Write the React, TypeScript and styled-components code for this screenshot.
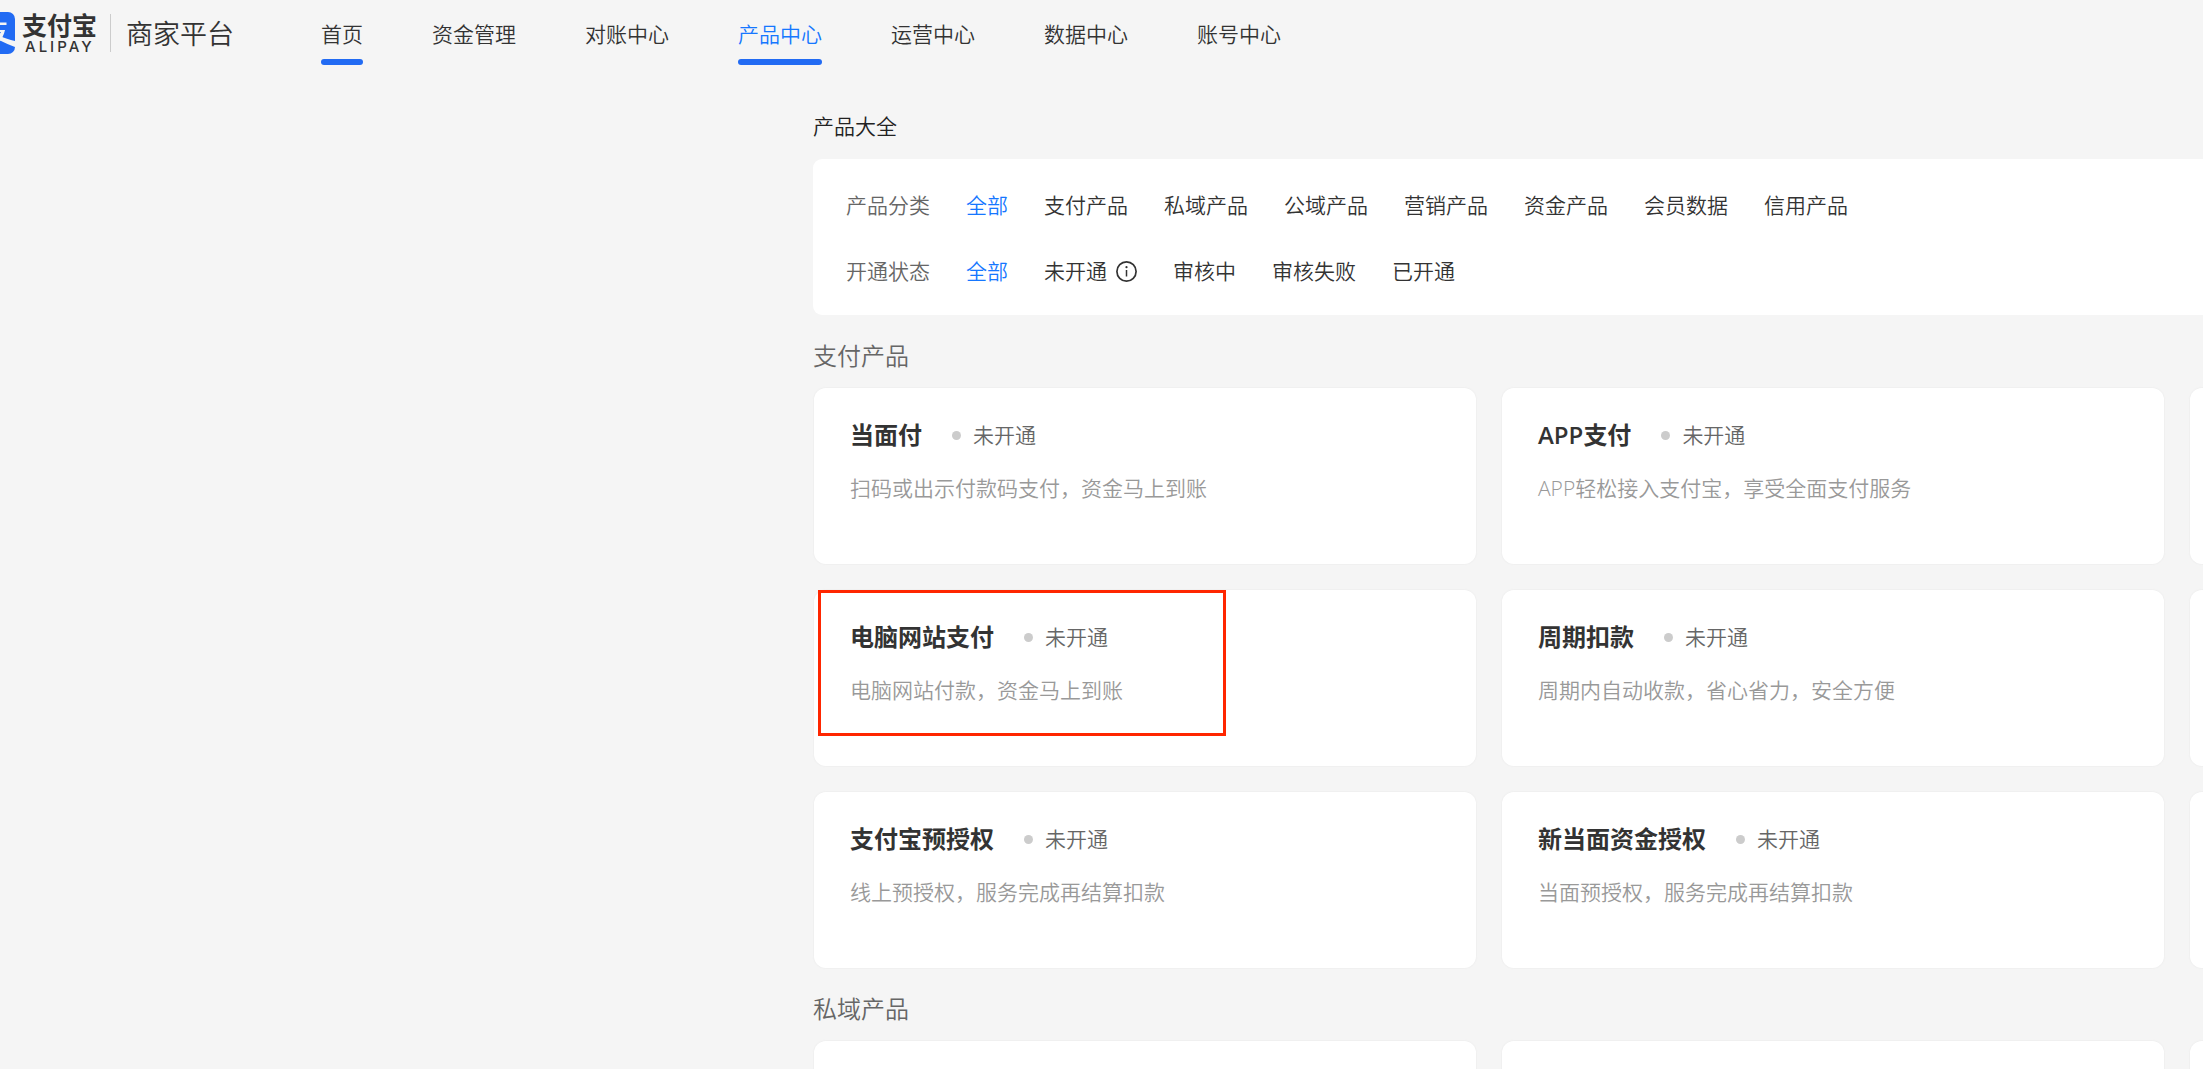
import React from "react";
import styled, { createGlobalStyle } from "styled-components";

const GlobalStyle = createGlobalStyle`
  *, *::before, *::after { box-sizing: border-box; }
  html { background: #f5f5f5; }
  body {
    margin: 0;
    background: #f5f5f5;
    color: #333;
    font-family: "Open Sans", "Noto Sans CJK SC", sans-serif;
    font-size: 21px;
    font-weight: 350;
    line-height: 32px;
    overflow: hidden;
  }
  button { font: inherit; color: inherit; }
`;

const Page = styled.div`
  height: 100vh;
  overflow: hidden;
`;

const Header = styled.header`
  display: flex;
  align-items: flex-start;
  height: 70px;
`;

const Brand = styled.a`
  display: flex;
  align-items: center;
  width: 321px;
  height: 66px;
  color: #333;
  text-decoration: none;
`;

const Mark = styled.svg`
  flex: none;
  width: 42px;
  height: 42px;
  margin-left: -27px;
`;

const Wordmark = styled.span`
  display: flex;
  flex-direction: column;
  width: 75px;
  margin-left: 7px;
`;

const WordmarkCn = styled.span`
  font-size: 25px;
  font-weight: 700;
  line-height: 27px;
  white-space: nowrap;
`;

const WordmarkEn = styled.span`
  margin-left: 3px;
  font-family: Inter, sans-serif;
  font-size: 15px;
  font-weight: 500;
  letter-spacing: 3px;
  line-height: 16px;
`;

const BrandName = styled.span`
  height: 38px;
  margin-left: 13px;
  padding: 2px 0 0 15px;
  border-left: 1px solid #ccc;
  font-size: 27px;
  line-height: 36px;
`;

const Nav = styled.nav`
  display: flex;
  gap: 69px;
`;

const NavLink = styled.a<{ $marked?: boolean; $current?: boolean }>`
  padding-top: 18px;
  color: ${(p) => (p.$current ? "#1677ff" : "#333")};
  text-decoration: none;
  white-space: nowrap;

  &::after {
    content: "";
    display: block;
    height: 6px;
    margin-top: 9px;
    border-radius: 3px;
    background: ${(p) => (p.$marked ? "#226bf3" : "transparent")};
  }
`;

const Main = styled.main`
  padding-left: calc((100vw - 577px) / 2);
`;

const PageTitle = styled.h1`
  margin: 0;
  padding: 40px 0 17px;
  color: #222;
  font-size: 21px;
  font-weight: 350;
  line-height: 32px;
`;

const Filters = styled.section`
  display: flex;
  flex-direction: column;
  gap: 34px;
  padding: 30px 33px 28px;
  border-radius: 9px 0 0 9px;
  background: #fff;
`;

const FilterRow = styled.div`
  display: flex;
  gap: 36px;
  white-space: nowrap;
`;

const FilterLabel = styled.span`
  color: #666;
`;

const FilterOption = styled.button<{ $selected?: boolean }>`
  display: flex;
  align-items: center;
  gap: 9px;
  padding: 0;
  border: 0;
  background: none;
  color: ${(p) => (p.$selected ? "#1677ff" : "#333")};
  cursor: pointer;
`;

const InfoIcon = styled.svg`
  width: 21px;
  height: 21px;
`;

const SectionTitle = styled.h2`
  margin: 0;
  padding: 23px 0 14px;
  color: #666;
  font-size: 24px;
  font-weight: 350;
  line-height: 36px;
`;

const CardGrid = styled.div`
  display: grid;
  grid-template-columns: repeat(3, calc((100% - 65px) / 2));
  grid-auto-rows: minmax(176px, auto);
  gap: 26px;
  margin-left: 1px;
`;

const Card = styled.article`
  position: relative;
  padding: 29px 36px;
  border-radius: 12px;
  background: #fff;
  box-shadow: 0 0 1px 1px #f0f0f0;
`;

const CardHead = styled.div`
  display: flex;
  align-items: center;
  margin-bottom: 19px;
`;

const CardTitle = styled.h3`
  margin: 0 30px 0 0;
  font-size: 24px;
  font-weight: 600;
  line-height: 36px;
`;

const Status = styled.span`
  display: flex;
  align-items: center;
  gap: 12px;
  color: #666;

  &::before {
    content: "";
    width: 9px;
    height: 9px;
    border-radius: 50%;
    background: #ccc;
  }
`;

const CardText = styled.p`
  margin: 0;
  color: #999;
`;

const Highlight = styled.div`
  position: absolute;
  top: 0;
  left: 4px;
  width: 408px;
  height: 146px;
  border: 3px solid #ff2600;
  pointer-events: none;
`;

interface Product {
  name: string;
  text: string;
  highlighted?: boolean;
}

const navItems = [
  { label: "首页", marked: true },
  { label: "资金管理" },
  { label: "对账中心" },
  { label: "产品中心", marked: true, current: true },
  { label: "运营中心" },
  { label: "数据中心" },
  { label: "账号中心" },
];

const categories = ["全部", "支付产品", "私域产品", "公域产品", "营销产品", "资金产品", "会员数据", "信用产品"];
const statuses = ["全部", "未开通", "审核中", "审核失败", "已开通"];

const paymentRows: Product[][] = [
  [
    { name: "当面付", text: "扫码或出示付款码支付，资金马上到账" },
    { name: "APP支付", text: "APP轻松接入支付宝，享受全面支付服务" },
  ],
  [
    { name: "电脑网站支付", text: "电脑网站付款，资金马上到账", highlighted: true },
    { name: "周期扣款", text: "周期内自动收款，省心省力，安全方便" },
  ],
  [
    { name: "支付宝预授权", text: "线上预授权，服务完成再结算扣款" },
    { name: "新当面资金授权", text: "当面预授权，服务完成再结算扣款" },
  ],
];

function ProductCard({ product }: { product: Product }) {
  return (
    <Card>
      <CardHead>
        <CardTitle>{product.name}</CardTitle>
        <Status>未开通</Status>
      </CardHead>
      <CardText>{product.text}</CardText>
      {product.highlighted && <Highlight />}
    </Card>
  );
}

export default function App() {
  return (
    <Page>
      <GlobalStyle />
      <Header>
        <Brand href="#">
          <Mark viewBox="0 0 42 42" aria-hidden="true">
            <rect width="42" height="42" rx="7" fill="#226bf3" />
            <path d="M9 11.8h24.5M21 5v13" fill="none" stroke="#f5f5f5" strokeWidth="2.4" />
            <path
              d="M12 18h20c-1.2 5-3.2 9-6 12.5-4 4-8 5.5-12 5.5-5 0-8-2.5-8-6.5s4-6.5 8.5-6.5c3.5 0 7 1 10 2.2 1.8-2.2 2.8-4.2 3.5-5.2H12zM22 27.5c-3-1.7-6-2.5-8.5-2.5-3 0-5 1.5-5 4s2 4 5 4c3.5 0 6-2 8.5-5.5z"
              fill="#f5f5f5"
              fillRule="evenodd"
            />
            <path d="M24 22.5c5 2.5 11 4.8 18 6.5v6c-6.5-2-12.5-5-19-8.5z" fill="#f5f5f5" />
          </Mark>
          <Wordmark>
            <WordmarkCn>支付宝</WordmarkCn>
            <WordmarkEn>ALIPAY</WordmarkEn>
          </Wordmark>
          <BrandName>商家平台</BrandName>
        </Brand>
        <Nav>
          {navItems.map((item) => (
            <NavLink key={item.label} href="#" $marked={item.marked} $current={item.current}>
              {item.label}
            </NavLink>
          ))}
        </Nav>
      </Header>
      <Main>
        <PageTitle>产品大全</PageTitle>
        <Filters>
          <FilterRow role="group" aria-labelledby="category-label">
            <FilterLabel id="category-label">产品分类</FilterLabel>
            {categories.map((name, i) => (
              <FilterOption key={name} type="button" $selected={i === 0}>
                {name}
              </FilterOption>
            ))}
          </FilterRow>
          <FilterRow role="group" aria-labelledby="status-label">
            <FilterLabel id="status-label">开通状态</FilterLabel>
            {statuses.map((name, i) => (
              <FilterOption key={name} type="button" $selected={i === 0}>
                {name}
                {name === "未开通" && (
                  <InfoIcon viewBox="0 0 21 21" aria-hidden="true">
                    <circle cx="10.5" cy="10.5" r="9.6" fill="none" stroke="#333" strokeWidth="1.7" />
                    <circle cx="10.5" cy="6.2" r="1.1" fill="#333" />
                    <path d="M10.5 9v6.5" stroke="#333" strokeWidth="1.5" />
                  </InfoIcon>
                )}
              </FilterOption>
            ))}
          </FilterRow>
        </Filters>
        <SectionTitle>支付产品</SectionTitle>
        <CardGrid>
          {paymentRows.map((row) => (
            <React.Fragment key={row[0].name}>
              {row.map((product) => (
                <ProductCard key={product.name} product={product} />
              ))}
              <Card />
            </React.Fragment>
          ))}
        </CardGrid>
        <SectionTitle>私域产品</SectionTitle>
        <CardGrid>
          <Card />
          <Card />
          <Card />
        </CardGrid>
      </Main>
    </Page>
  );
}
